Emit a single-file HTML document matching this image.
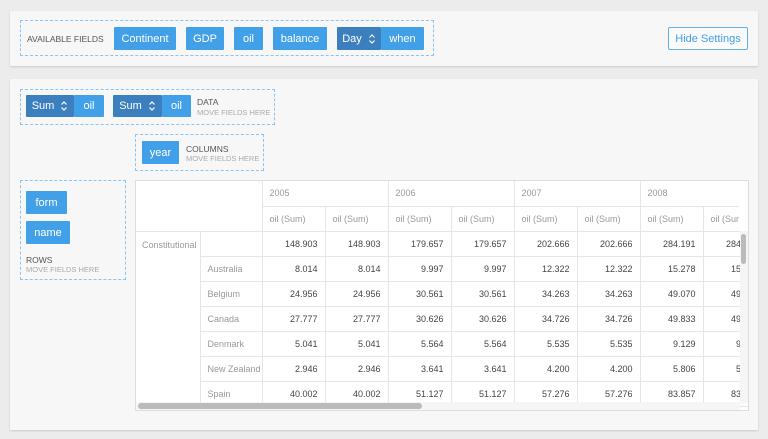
<!DOCTYPE html>
<html><head><style>
*{box-sizing:border-box;margin:0;padding:0}
body{width:768px;height:439px;background:#ececec;font-family:"Liberation Sans",sans-serif;position:relative;overflow:hidden}
.abs{position:absolute}
.panel{background:#f7f7f7;box-shadow:0 1px 2px rgba(0,0,0,.15)}
.dash{border:1px dashed #8cc3f0}
.btn{position:absolute;background:#42a0e8;color:#fff;font-size:11px;display:flex;align-items:center;justify-content:center;border-radius:1px}
.dk{background:#3b7fbf}
.lbl{position:absolute;font-size:8.5px;color:#555;}
.sub{position:absolute;font-size:7.5px;color:#aaa}
.chev{display:inline-block;width:8px;height:12px;margin-left:6px}
table{border-collapse:collapse;font-size:9px;table-layout:fixed}
td{height:25px;border:1px solid #e6e6e6;padding:0 7px;white-space:nowrap;overflow:hidden}
td.n{text-align:right;color:#444}
td.h{color:#999}
</style></head><body>
<div class="abs panel" style="left:10px;top:11px;width:748px;height:55px"></div>
<div class="abs dash" style="left:20px;top:20px;width:414px;height:36px"></div>
<div class="lbl" style="left:27px;top:34px;font-size:8.5px">AVAILABLE FIELDS</div>
<div class="btn" style="left:114px;top:27px;width:62px;height:23px">Continent</div>
<div class="btn" style="left:186px;top:27px;width:38px;height:23px">GDP</div>
<div class="btn" style="left:234px;top:27px;width:29px;height:23px">oil</div>
<div class="btn" style="left:273px;top:27px;width:54px;height:23px">balance</div>
<div class="btn dk" style="left:337px;top:27px;width:44px;height:23px">Day<svg class="chev" viewBox="0 0 8 12"><path d="M1.5 4.5 4 2 6.5 4.5M1.5 7.5 4 10 6.5 7.5" stroke="#fff" fill="none" stroke-width="1.2"/></svg></div>
<div class="btn" style="left:381px;top:27px;width:43px;height:23px">when</div>
<div class="abs" style="left:668px;top:27px;width:80px;height:23px;border:1px solid #64b0ee;border-radius:2px;color:#42a0e8;font-size:11px;display:flex;align-items:center;justify-content:center;background:#fafafa">Hide Settings</div>

<div class="abs panel" style="left:10px;top:79px;width:748px;height:351px"></div>
<div class="abs dash" style="left:20px;top:89px;width:255px;height:36px"></div>
<div class="btn dk" style="left:26px;top:95px;width:48px;height:22px">Sum<svg class="chev" viewBox="0 0 8 12"><path d="M1.5 4.5 4 2 6.5 4.5M1.5 7.5 4 10 6.5 7.5" stroke="#fff" fill="none" stroke-width="1.2"/></svg></div>
<div class="btn" style="left:74px;top:95px;width:30px;height:22px">oil</div>
<div class="btn dk" style="left:113px;top:95px;width:49px;height:22px">Sum<svg class="chev" viewBox="0 0 8 12"><path d="M1.5 4.5 4 2 6.5 4.5M1.5 7.5 4 10 6.5 7.5" stroke="#fff" fill="none" stroke-width="1.2"/></svg></div>
<div class="btn" style="left:162px;top:95px;width:29px;height:22px">oil</div>
<div class="lbl" style="left:197px;top:97px">DATA</div>
<div class="sub" style="left:197px;top:108px">MOVE FIELDS HERE</div>

<div class="abs dash" style="left:135px;top:134px;width:129px;height:37px"></div>
<div class="btn" style="left:142px;top:141px;width:37px;height:23px">year</div>
<div class="lbl" style="left:186px;top:144px">COLUMNS</div>
<div class="sub" style="left:186px;top:154px">MOVE FIELDS HERE</div>

<div class="abs dash" style="left:20px;top:180px;width:106px;height:100px"></div>
<div class="btn" style="left:26px;top:191px;width:41px;height:23px">form</div>
<div class="btn" style="left:26px;top:221px;width:44px;height:23px">name</div>
<div class="lbl" style="left:26px;top:255px">ROWS</div>
<div class="sub" style="left:26px;top:265px">MOVE FIELDS HERE</div>

<div class="abs" style="left:135px;top:180px;width:614px;height:231px;border:1px solid #ddd;background:#fff;overflow:hidden">
<table style="width:630px">
<colgroup><col style="width:64px"><col style="width:62px"><col style="width:63px"><col style="width:63px"><col style="width:63px"><col style="width:63px"><col style="width:63px"><col style="width:63px"><col style="width:63px"><col style="width:63px"></colgroup>
<tr><td colspan="2" rowspan="2" style="border-top:0;border-left:0"></td><td colspan="2" class="h" style="border-top:0">2005</td><td colspan="2" class="h" style="border-top:0">2006</td><td colspan="2" class="h" style="border-top:0">2007</td><td colspan="2" class="h" style="border-top:0">2008</td></tr>
<tr><td class="h">oil (Sum)</td><td class="h">oil (Sum)</td><td class="h">oil (Sum)</td><td class="h">oil (Sum)</td><td class="h">oil (Sum)</td><td class="h">oil (Sum)</td><td class="h">oil (Sum)</td><td class="h">oil (Sum)</td></tr>
<tr><td class="h" rowspan="7" style="vertical-align:top;padding-top:8px;padding-left:6px;border-left:0">Constitutional</td><td></td><td class="n">148.903</td><td class="n">148.903</td><td class="n">179.657</td><td class="n">179.657</td><td class="n">202.666</td><td class="n">202.666</td><td class="n">284.191</td><td class="n">284.191</td></tr>
<tr><td class="h">Australia</td><td class="n">8.014</td><td class="n">8.014</td><td class="n">9.997</td><td class="n">9.997</td><td class="n">12.322</td><td class="n">12.322</td><td class="n">15.278</td><td class="n">15.278</td></tr>
<tr><td class="h">Belgium</td><td class="n">24.956</td><td class="n">24.956</td><td class="n">30.561</td><td class="n">30.561</td><td class="n">34.263</td><td class="n">34.263</td><td class="n">49.070</td><td class="n">49.070</td></tr>
<tr><td class="h">Canada</td><td class="n">27.777</td><td class="n">27.777</td><td class="n">30.626</td><td class="n">30.626</td><td class="n">34.726</td><td class="n">34.726</td><td class="n">49.833</td><td class="n">49.833</td></tr>
<tr><td class="h">Denmark</td><td class="n">5.041</td><td class="n">5.041</td><td class="n">5.564</td><td class="n">5.564</td><td class="n">5.535</td><td class="n">5.535</td><td class="n">9.129</td><td class="n">9.129</td></tr>
<tr><td class="h">New Zealand</td><td class="n">2.946</td><td class="n">2.946</td><td class="n">3.641</td><td class="n">3.641</td><td class="n">4.200</td><td class="n">4.200</td><td class="n">5.806</td><td class="n">5.806</td></tr>
<tr><td class="h">Spain</td><td class="n">40.002</td><td class="n">40.002</td><td class="n">51.127</td><td class="n">51.127</td><td class="n">57.276</td><td class="n">57.276</td><td class="n">83.857</td><td class="n">83.857</td></tr>
</table>
<div class="abs" style="left:603px;top:0;width:10px;height:50px;background:#fff"></div>
<div class="abs" style="left:604px;top:50px;width:8px;height:172px;background:#f5f5f5"></div>
<div class="abs" style="left:605px;top:53px;width:5px;height:30px;background:#bbb;border-radius:3px"></div>
<div class="abs" style="left:0;top:221px;width:604px;height:9px;background:#f5f5f5"></div>
<div class="abs" style="left:2px;top:222px;width:284px;height:6px;background:#bbb;border-radius:3px"></div>
</div>
</body></html>
